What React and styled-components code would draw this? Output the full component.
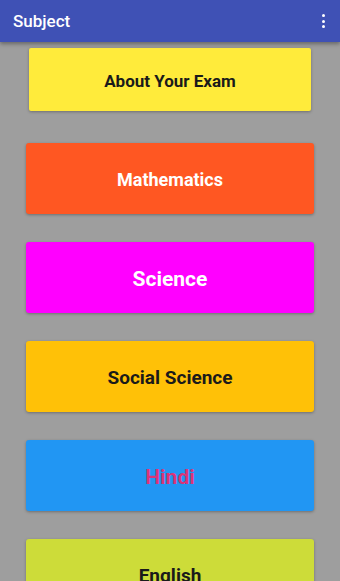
import React from 'react';
import styled, { createGlobalStyle } from 'styled-components';

const subjects = [
    { name: 'Mathematics', bg: '#FF5722', color: '#FFFFFF', size: 18 },
    { name: 'Science', bg: '#FF00FF', color: '#FFFFFF', size: 21 },
    { name: 'Social Science', bg: '#FFC107', color: '#1a1a1a', size: 19 },
    { name: 'Hindi', bg: '#2196F3', color: '#DB3378', size: 21 },
    { name: 'English', bg: '#CDDC39', color: '#1a1a1a', size: 19 },
];

function App() {
    return (
        <>
            <GlobalStyle />
            <Screen>
                <AppBar>
                    <Title>Subject</Title>
                    <MenuButton aria-label="More options">
                        <Dot />
                        <Dot />
                        <Dot />
                    </MenuButton>
                </AppBar>

                <List>
                    <ExamCard>About Your Exam</ExamCard>
                    {subjects.map((s) => (
                        <SubjectCard key={s.name} $bg={s.bg} $color={s.color} $size={s.size}>
                            {s.name}
                        </SubjectCard>
                    ))}
                </List>
            </Screen>
        </>
    )
}

export default App


const GlobalStyle = createGlobalStyle`
    html, body {
        margin: 0;
        padding: 0;
        overflow: hidden;
        background: #9E9E9E;
    }
    body {
        font-family: Roboto, "Noto Sans", sans-serif;
    }
`

const Screen = styled.div`
    width: 340px;
    height: 581px;
    overflow: hidden;
    background-color: #9E9E9E;
    display: flex;
    flex-direction: column;
`

const AppBar = styled.div`
    height: 42px;
    flex-shrink: 0;
    display: flex;
    align-items: center;
    justify-content: space-between;
    padding: 0 15px 0 13px;
    background-color: #3F51B5;
    box-shadow: 0 2px 4px rgba(0, 0, 0, 0.35);
    position: relative;
    z-index: 2;
`

const Title = styled.h1`
    margin: 0;
    font-size: 17px;
    font-weight: 500;
    color: #ffffff;
`

const MenuButton = styled.div`
    display: flex;
    flex-direction: column;
    align-items: center;
    gap: 2.5px;
`

const Dot = styled.span`
    width: 3px;
    height: 3px;
    border-radius: 50%;
    background-color: #ffffff;
`

const List = styled.div`
    display: flex;
    flex-direction: column;
    align-items: center;
    padding-top: 6px;
`

const Card = styled.div`
    display: flex;
    align-items: center;
    justify-content: center;
    padding-top: 2px;
    box-sizing: border-box;
    font-weight: 700;
    border-radius: 3px;
    box-shadow: 0 1px 3px rgba(0, 0, 0, 0.3);
    flex-shrink: 0;
`

const ExamCard = styled(Card)`
    width: 282px;
    height: 63px;
    margin-bottom: 32px;
    border-radius: 2px;
    background-color: #FFEB3B;
    color: #1a1a1a;
    font-size: 17px;
`

const SubjectCard = styled(Card)`
    width: 288px;
    height: 71px;
    margin-bottom: 28px;
    background-color: ${(p) => p.$bg};
    color: ${(p) => p.$color};
    font-size: ${(p) => p.$size}px;
`
